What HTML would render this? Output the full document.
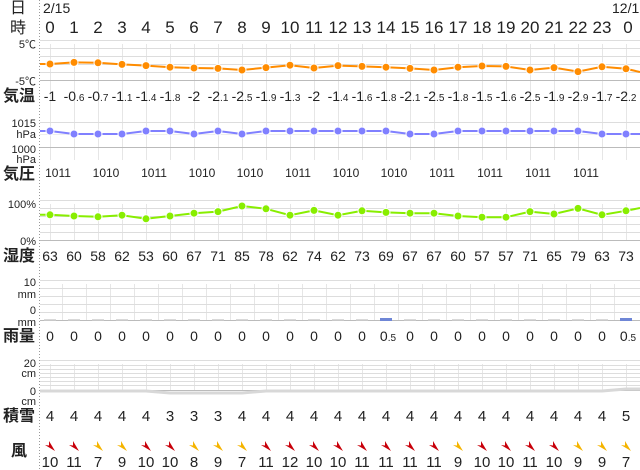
<!DOCTYPE html>
<html><head><meta charset="utf-8"><style>
html,body{margin:0;padding:0;background:#fff;}
svg{display:block;font-family:"Liberation Sans","Noto Sans CJK JP",sans-serif;}
.h{font-size:17px;fill:#222;text-anchor:middle}
.v{font-size:14px;fill:#222;text-anchor:middle}
.v tspan.s{font-size:10px}
.ax{font-size:11px;fill:#222;text-anchor:end}
.lb{font-size:16px;font-weight:bold;fill:#222;text-anchor:middle;font-family:"Noto Sans CJK JP",sans-serif}
.g line{stroke:#ddd;stroke-width:1}
.vg line{stroke:#e6e6e6;stroke-width:1}
</style></head><body>
<svg width="640" height="470" viewBox="0 0 640 470" xmlns="http://www.w3.org/2000/svg">
<line x1="39.5" y1="0" x2="39.5" y2="470" stroke="#999" stroke-dasharray="1,2"/>

<text class="lb" x="18" y="13" style="font-weight:normal">日</text>
<text class="lb" x="18" y="33" style="font-weight:normal">時</text>
<text x="43" y="13" style="font-size:14px;fill:#222">2/15</text>
<text x="612" y="13" style="font-size:14px;fill:#222">12/1</text>
<g class="h">
<text x="50" y="33">0</text><text x="74" y="33">1</text><text x="98" y="33">2</text><text x="122" y="33">3</text><text x="146" y="33">4</text><text x="170" y="33">5</text><text x="194" y="33">6</text><text x="218" y="33">7</text><text x="242" y="33">8</text><text x="266" y="33">9</text><text x="290" y="33">10</text><text x="314" y="33">11</text><text x="338" y="33">12</text><text x="362" y="33">13</text><text x="386" y="33">14</text><text x="410" y="33">15</text><text x="434" y="33">16</text><text x="458" y="33">17</text><text x="482" y="33">18</text><text x="506" y="33">19</text><text x="530" y="33">20</text><text x="554" y="33">21</text><text x="578" y="33">22</text><text x="602" y="33">23</text><text x="628" y="33">0</text>
</g>

<!-- vertical grids at columns -->
<g class="vg">
<line x1="50.5" y1="44" x2="50.5" y2="160"/><line x1="74.5" y1="44" x2="74.5" y2="160"/><line x1="98.5" y1="44" x2="98.5" y2="160"/><line x1="122.5" y1="44" x2="122.5" y2="160"/><line x1="146.5" y1="44" x2="146.5" y2="160"/><line x1="170.5" y1="44" x2="170.5" y2="160"/><line x1="194.5" y1="44" x2="194.5" y2="160"/><line x1="218.5" y1="44" x2="218.5" y2="160"/><line x1="242.5" y1="44" x2="242.5" y2="160"/><line x1="266.5" y1="44" x2="266.5" y2="160"/><line x1="290.5" y1="44" x2="290.5" y2="160"/><line x1="314.5" y1="44" x2="314.5" y2="160"/><line x1="338.5" y1="44" x2="338.5" y2="160"/><line x1="362.5" y1="44" x2="362.5" y2="160"/><line x1="386.5" y1="44" x2="386.5" y2="160"/><line x1="410.5" y1="44" x2="410.5" y2="160"/><line x1="434.5" y1="44" x2="434.5" y2="160"/><line x1="458.5" y1="44" x2="458.5" y2="160"/><line x1="482.5" y1="44" x2="482.5" y2="160"/><line x1="506.5" y1="44" x2="506.5" y2="160"/><line x1="530.5" y1="44" x2="530.5" y2="160"/><line x1="554.5" y1="44" x2="554.5" y2="160"/><line x1="578.5" y1="44" x2="578.5" y2="160"/><line x1="602.5" y1="44" x2="602.5" y2="160"/><line x1="626.5" y1="44" x2="626.5" y2="160"/>
</g>
<g class="vg">
<line x1="50.5" y1="204" x2="50.5" y2="240"/><line x1="74.5" y1="204" x2="74.5" y2="240"/><line x1="98.5" y1="204" x2="98.5" y2="240"/><line x1="122.5" y1="204" x2="122.5" y2="240"/><line x1="146.5" y1="204" x2="146.5" y2="240"/><line x1="170.5" y1="204" x2="170.5" y2="240"/><line x1="194.5" y1="204" x2="194.5" y2="240"/><line x1="218.5" y1="204" x2="218.5" y2="240"/><line x1="242.5" y1="204" x2="242.5" y2="240"/><line x1="266.5" y1="204" x2="266.5" y2="240"/><line x1="290.5" y1="204" x2="290.5" y2="240"/><line x1="314.5" y1="204" x2="314.5" y2="240"/><line x1="338.5" y1="204" x2="338.5" y2="240"/><line x1="362.5" y1="204" x2="362.5" y2="240"/><line x1="386.5" y1="204" x2="386.5" y2="240"/><line x1="410.5" y1="204" x2="410.5" y2="240"/><line x1="434.5" y1="204" x2="434.5" y2="240"/><line x1="458.5" y1="204" x2="458.5" y2="240"/><line x1="482.5" y1="204" x2="482.5" y2="240"/><line x1="506.5" y1="204" x2="506.5" y2="240"/><line x1="530.5" y1="204" x2="530.5" y2="240"/><line x1="554.5" y1="204" x2="554.5" y2="240"/><line x1="578.5" y1="204" x2="578.5" y2="240"/><line x1="602.5" y1="204" x2="602.5" y2="240"/><line x1="626.5" y1="204" x2="626.5" y2="240"/>
</g>
<!-- rain/snow vertical grids at midpoints -->
<g class="vg">
<line x1="62.5" y1="284" x2="62.5" y2="320"/><line x1="86.5" y1="284" x2="86.5" y2="320"/><line x1="110.5" y1="284" x2="110.5" y2="320"/><line x1="134.5" y1="284" x2="134.5" y2="320"/><line x1="158.5" y1="284" x2="158.5" y2="320"/><line x1="182.5" y1="284" x2="182.5" y2="320"/><line x1="206.5" y1="284" x2="206.5" y2="320"/><line x1="230.5" y1="284" x2="230.5" y2="320"/><line x1="254.5" y1="284" x2="254.5" y2="320"/><line x1="278.5" y1="284" x2="278.5" y2="320"/><line x1="302.5" y1="284" x2="302.5" y2="320"/><line x1="326.5" y1="284" x2="326.5" y2="320"/><line x1="350.5" y1="284" x2="350.5" y2="320"/><line x1="374.5" y1="284" x2="374.5" y2="320"/><line x1="398.5" y1="284" x2="398.5" y2="320"/><line x1="422.5" y1="284" x2="422.5" y2="320"/><line x1="446.5" y1="284" x2="446.5" y2="320"/><line x1="470.5" y1="284" x2="470.5" y2="320"/><line x1="494.5" y1="284" x2="494.5" y2="320"/><line x1="518.5" y1="284" x2="518.5" y2="320"/><line x1="542.5" y1="284" x2="542.5" y2="320"/><line x1="566.5" y1="284" x2="566.5" y2="320"/><line x1="590.5" y1="284" x2="590.5" y2="320"/><line x1="614.5" y1="284" x2="614.5" y2="320"/>
</g>
<g class="vg">
<line x1="50.5" y1="364" x2="50.5" y2="390"/><line x1="74.5" y1="364" x2="74.5" y2="390"/><line x1="98.5" y1="364" x2="98.5" y2="390"/><line x1="122.5" y1="364" x2="122.5" y2="390"/><line x1="146.5" y1="364" x2="146.5" y2="390"/><line x1="170.5" y1="364" x2="170.5" y2="390"/><line x1="194.5" y1="364" x2="194.5" y2="390"/><line x1="218.5" y1="364" x2="218.5" y2="390"/><line x1="242.5" y1="364" x2="242.5" y2="390"/><line x1="266.5" y1="364" x2="266.5" y2="390"/><line x1="290.5" y1="364" x2="290.5" y2="390"/><line x1="314.5" y1="364" x2="314.5" y2="390"/><line x1="338.5" y1="364" x2="338.5" y2="390"/><line x1="362.5" y1="364" x2="362.5" y2="390"/><line x1="386.5" y1="364" x2="386.5" y2="390"/><line x1="410.5" y1="364" x2="410.5" y2="390"/><line x1="434.5" y1="364" x2="434.5" y2="390"/><line x1="458.5" y1="364" x2="458.5" y2="390"/><line x1="482.5" y1="364" x2="482.5" y2="390"/><line x1="506.5" y1="364" x2="506.5" y2="390"/><line x1="530.5" y1="364" x2="530.5" y2="390"/><line x1="554.5" y1="364" x2="554.5" y2="390"/><line x1="578.5" y1="364" x2="578.5" y2="390"/><line x1="602.5" y1="364" x2="602.5" y2="390"/><line x1="626.5" y1="364" x2="626.5" y2="390"/>
</g>

<!-- horizontal grids -->
<g class="g">
<line x1="40" y1="40.5" x2="640" y2="40.5"/><line x1="40" y1="48.5" x2="640" y2="48.5"/><line x1="40" y1="56.5" x2="640" y2="56.5"/><line x1="40" y1="64.5" x2="640" y2="64.5"/><line x1="40" y1="72.5" x2="640" y2="72.5"/>
<line x1="40" y1="122.5" x2="640" y2="122.5"/><line x1="40" y1="134.5" x2="640" y2="134.5" style="stroke:#eee"/>
<line x1="40" y1="200.5" x2="640" y2="200.5"/><line x1="40" y1="208.5" x2="640" y2="208.5"/><line x1="40" y1="216.5" x2="640" y2="216.5"/><line x1="40" y1="224.5" x2="640" y2="224.5"/><line x1="40" y1="232.5" x2="640" y2="232.5"/>
<line x1="40" y1="280.5" x2="640" y2="280.5"/><line x1="40" y1="288.5" x2="640" y2="288.5"/><line x1="40" y1="296.5" x2="640" y2="296.5"/><line x1="40" y1="304.5" x2="640" y2="304.5"/><line x1="40" y1="312.5" x2="640" y2="312.5"/>
<line x1="40" y1="360.5" x2="640" y2="360.5"/><line x1="40" y1="365.5" x2="640" y2="365.5"/><line x1="40" y1="369.5" x2="640" y2="369.5"/><line x1="40" y1="373.5" x2="640" y2="373.5"/><line x1="40" y1="377.5" x2="640" y2="377.5"/><line x1="40" y1="381.5" x2="640" y2="381.5"/><line x1="40" y1="385.5" x2="640" y2="385.5"/>
</g>
<g stroke="#bbb" stroke-width="1">
<line x1="40" y1="80.5" x2="640" y2="80.5"/><line x1="40" y1="147.5" x2="640" y2="147.5"/><line x1="40" y1="240.5" x2="640" y2="240.5"/><line x1="40" y1="320.5" x2="640" y2="320.5"/><line x1="40" y1="390.5" x2="640" y2="390.5"/>
</g>

<!-- axis labels -->
<g class="ax">
<text x="36" y="48">5℃</text><text x="36" y="85">-5℃</text>
<text x="36" y="127">1015</text><text x="36" y="138">hPa</text>
<text x="36" y="153">1000</text><text x="36" y="163">hPa</text>
<text x="36" y="208">100%</text><text x="36" y="245">0%</text>
<text x="36" y="286">10</text><text x="36" y="298">mm</text>
<text x="36" y="314">0</text><text x="36" y="326">mm</text>
<text x="36" y="367">20</text><text x="36" y="377">cm</text>
<text x="36" y="395">0</text><text x="36" y="405">cm</text>
</g>
<g class="lb">
<text x="19" y="101">気温</text><text x="19" y="179">気圧</text><text x="19" y="261">湿度</text><text x="19" y="341">雨量</text><text x="19" y="421">積雪</text><text x="19" y="456">風</text>
</g>

<!-- temperature -->
<polyline fill="none" stroke="#ff8c00" stroke-width="2" points="40,64 50,64 74,62.4 98,62.8 122,64.4 146,65.6 170,67.2 194,68 218,68.4 242,70 266,67.6 290,65.2 314,68 338,65.6 362,66.4 386,67.2 410,68.4 434,70 458,67.2 482,66 506,66.4 530,70 554,67.6 578,71.6 602,66.8 626,68.8 640,72"/>
<g fill="#ff8c00" stroke="#fff" stroke-width="1">
<circle cx="50" cy="64" r="4"/><circle cx="74" cy="62.4" r="4"/><circle cx="98" cy="62.8" r="4"/><circle cx="122" cy="64.4" r="4"/><circle cx="146" cy="65.6" r="4"/><circle cx="170" cy="67.2" r="4"/><circle cx="194" cy="68" r="4"/><circle cx="218" cy="68.4" r="4"/><circle cx="242" cy="70" r="4"/><circle cx="266" cy="67.6" r="4"/><circle cx="290" cy="65.2" r="4"/><circle cx="314" cy="68" r="4"/><circle cx="338" cy="65.6" r="4"/><circle cx="362" cy="66.4" r="4"/><circle cx="386" cy="67.2" r="4"/><circle cx="410" cy="68.4" r="4"/><circle cx="434" cy="70" r="4"/><circle cx="458" cy="67.2" r="4"/><circle cx="482" cy="66" r="4"/><circle cx="506" cy="66.4" r="4"/><circle cx="530" cy="70" r="4"/><circle cx="554" cy="67.6" r="4"/><circle cx="578" cy="71.6" r="4"/><circle cx="602" cy="66.8" r="4"/><circle cx="626" cy="68.8" r="4"/>
</g>
<g class="v">
<text x="50" y="101">-1</text><text x="74" y="101">-0<tspan class="s">.6</tspan></text><text x="98" y="101">-0<tspan class="s">.7</tspan></text><text x="122" y="101">-1<tspan class="s">.1</tspan></text><text x="146" y="101">-1<tspan class="s">.4</tspan></text><text x="170" y="101">-1<tspan class="s">.8</tspan></text><text x="194" y="101">-2</text><text x="218" y="101">-2<tspan class="s">.1</tspan></text><text x="242" y="101">-2<tspan class="s">.5</tspan></text><text x="266" y="101">-1<tspan class="s">.9</tspan></text><text x="290" y="101">-1<tspan class="s">.3</tspan></text><text x="314" y="101">-2</text><text x="338" y="101">-1<tspan class="s">.4</tspan></text><text x="362" y="101">-1<tspan class="s">.6</tspan></text><text x="386" y="101">-1<tspan class="s">.8</tspan></text><text x="410" y="101">-2<tspan class="s">.1</tspan></text><text x="434" y="101">-2<tspan class="s">.5</tspan></text><text x="458" y="101">-1<tspan class="s">.8</tspan></text><text x="482" y="101">-1<tspan class="s">.5</tspan></text><text x="506" y="101">-1<tspan class="s">.6</tspan></text><text x="530" y="101">-2<tspan class="s">.5</tspan></text><text x="554" y="101">-1<tspan class="s">.9</tspan></text><text x="578" y="101">-2<tspan class="s">.9</tspan></text><text x="602" y="101">-1<tspan class="s">.7</tspan></text><text x="626" y="101">-2<tspan class="s">.2</tspan></text>
</g>

<!-- pressure -->
<polyline fill="none" stroke="#8080ff" stroke-width="2" points="40,131 50,131 74,134 98,134 122,134 146,131 170,131 194,134 218,131 242,134 266,131 290,131 314,131 338,131 362,131 386,131 410,134 434,134 458,131 482,131 506,131 530,131 554,131 578,131 602,134 626,134 640,134"/>
<g fill="#8080ff" stroke="#fff" stroke-width="1">
<circle cx="50" cy="131" r="4"/><circle cx="74" cy="134" r="4"/><circle cx="98" cy="134" r="4"/><circle cx="122" cy="134" r="4"/><circle cx="146" cy="131" r="4"/><circle cx="170" cy="131" r="4"/><circle cx="194" cy="134" r="4"/><circle cx="218" cy="131" r="4"/><circle cx="242" cy="134" r="4"/><circle cx="266" cy="131" r="4"/><circle cx="290" cy="131" r="4"/><circle cx="314" cy="131" r="4"/><circle cx="338" cy="131" r="4"/><circle cx="362" cy="131" r="4"/><circle cx="386" cy="131" r="4"/><circle cx="410" cy="134" r="4"/><circle cx="434" cy="134" r="4"/><circle cx="458" cy="131" r="4"/><circle cx="482" cy="131" r="4"/><circle cx="506" cy="131" r="4"/><circle cx="530" cy="131" r="4"/><circle cx="554" cy="131" r="4"/><circle cx="578" cy="131" r="4"/><circle cx="602" cy="134" r="4"/><circle cx="626" cy="134" r="4"/>
</g>
<g class="v" style="font-size:12px">
<text x="58" y="177">1011</text><text x="106" y="177">1010</text><text x="154" y="177">1011</text><text x="202" y="177">1010</text><text x="250" y="177">1010</text><text x="298" y="177">1011</text><text x="346" y="177">1010</text><text x="394" y="177">1010</text><text x="442" y="177">1011</text><text x="490" y="177">1011</text><text x="538" y="177">1011</text><text x="586" y="177">1011</text>
</g>

<!-- humidity -->
<polyline fill="none" stroke="#88ee00" stroke-width="2" points="40,214.8 50,214.8 74,216 98,216.8 122,215.2 146,218.8 170,216 194,213.2 218,211.6 242,206 266,208.8 290,215.2 314,210.4 338,215.2 362,210.8 386,212.4 410,213.2 434,213.2 458,216 482,217.2 506,217.2 530,211.6 554,214 578,208.4 602,214.8 626,210.8 640,208"/>
<g fill="#88ee00" stroke="#fff" stroke-width="1">
<circle cx="50" cy="214.8" r="4"/><circle cx="74" cy="216" r="4"/><circle cx="98" cy="216.8" r="4"/><circle cx="122" cy="215.2" r="4"/><circle cx="146" cy="218.8" r="4"/><circle cx="170" cy="216" r="4"/><circle cx="194" cy="213.2" r="4"/><circle cx="218" cy="211.6" r="4"/><circle cx="242" cy="206" r="4"/><circle cx="266" cy="208.8" r="4"/><circle cx="290" cy="215.2" r="4"/><circle cx="314" cy="210.4" r="4"/><circle cx="338" cy="215.2" r="4"/><circle cx="362" cy="210.8" r="4"/><circle cx="386" cy="212.4" r="4"/><circle cx="410" cy="213.2" r="4"/><circle cx="434" cy="213.2" r="4"/><circle cx="458" cy="216" r="4"/><circle cx="482" cy="217.2" r="4"/><circle cx="506" cy="217.2" r="4"/><circle cx="530" cy="211.6" r="4"/><circle cx="554" cy="214" r="4"/><circle cx="578" cy="208.4" r="4"/><circle cx="602" cy="214.8" r="4"/><circle cx="626" cy="210.8" r="4"/>
</g>
<g class="v">
<text x="50" y="261">63</text><text x="74" y="261">60</text><text x="98" y="261">58</text><text x="122" y="261">62</text><text x="146" y="261">53</text><text x="170" y="261">60</text><text x="194" y="261">67</text><text x="218" y="261">71</text><text x="242" y="261">85</text><text x="266" y="261">78</text><text x="290" y="261">62</text><text x="314" y="261">74</text><text x="338" y="261">62</text><text x="362" y="261">73</text><text x="386" y="261">69</text><text x="410" y="261">67</text><text x="434" y="261">67</text><text x="458" y="261">60</text><text x="482" y="261">57</text><text x="506" y="261">57</text><text x="530" y="261">71</text><text x="554" y="261">65</text><text x="578" y="261">79</text><text x="602" y="261">63</text><text x="626" y="261">73</text>
</g>

<!-- rain -->
<g stroke="#ccc" stroke-width="1.5">
<line x1="44" y1="320" x2="56" y2="320"/><line x1="68" y1="320" x2="80" y2="320"/><line x1="92" y1="320" x2="104" y2="320"/><line x1="116" y1="320" x2="128" y2="320"/><line x1="140" y1="320" x2="152" y2="320"/><line x1="164" y1="320" x2="176" y2="320"/><line x1="188" y1="320" x2="200" y2="320"/><line x1="212" y1="320" x2="224" y2="320"/><line x1="236" y1="320" x2="248" y2="320"/><line x1="260" y1="320" x2="272" y2="320"/><line x1="284" y1="320" x2="296" y2="320"/><line x1="308" y1="320" x2="320" y2="320"/><line x1="332" y1="320" x2="344" y2="320"/><line x1="356" y1="320" x2="368" y2="320"/><line x1="404" y1="320" x2="416" y2="320"/><line x1="428" y1="320" x2="440" y2="320"/><line x1="452" y1="320" x2="464" y2="320"/><line x1="476" y1="320" x2="488" y2="320"/><line x1="500" y1="320" x2="512" y2="320"/><line x1="524" y1="320" x2="536" y2="320"/><line x1="548" y1="320" x2="560" y2="320"/><line x1="572" y1="320" x2="584" y2="320"/><line x1="596" y1="320" x2="608" y2="320"/>
</g>
<rect x="380" y="318" width="12" height="3" fill="#6f86d6"/>
<rect x="620" y="318" width="12" height="3" fill="#6f86d6"/>
<g class="v">
<text x="50" y="341">0</text><text x="74" y="341">0</text><text x="98" y="341">0</text><text x="122" y="341">0</text><text x="146" y="341">0</text><text x="170" y="341">0</text><text x="194" y="341">0</text><text x="218" y="341">0</text><text x="242" y="341">0</text><text x="266" y="341">0</text><text x="290" y="341">0</text><text x="314" y="341">0</text><text x="338" y="341">0</text><text x="362" y="341">0</text><text x="388" y="341">0<tspan class="s">.5</tspan></text><text x="410" y="341">0</text><text x="434" y="341">0</text><text x="458" y="341">0</text><text x="482" y="341">0</text><text x="506" y="341">0</text><text x="530" y="341">0</text><text x="554" y="341">0</text><text x="578" y="341">0</text><text x="602" y="341">0</text><text x="628" y="341">0<tspan class="s">.5</tspan></text>
</g>

<!-- snow -->
<polyline fill="none" stroke="#d8d8d8" stroke-width="3" points="40,391 146,391 170,393 242,393 266,391 602,391 626,389 640,389"/>
<g class="v" style="font-size:15px">
<text x="50" y="421">4</text><text x="74" y="421">4</text><text x="98" y="421">4</text><text x="122" y="421">4</text><text x="146" y="421">4</text><text x="170" y="421">3</text><text x="194" y="421">3</text><text x="218" y="421">3</text><text x="242" y="421">4</text><text x="266" y="421">4</text><text x="290" y="421">4</text><text x="314" y="421">4</text><text x="338" y="421">4</text><text x="362" y="421">4</text><text x="386" y="421">4</text><text x="410" y="421">4</text><text x="434" y="421">4</text><text x="458" y="421">4</text><text x="482" y="421">4</text><text x="506" y="421">4</text><text x="530" y="421">4</text><text x="554" y="421">4</text><text x="578" y="421">4</text><text x="602" y="421">4</text><text x="626" y="421">5</text>
</g>

<!-- wind arrows -->
<defs>
<polygon id="ar" points="5,5 -5,-1 -1,-0.5 -1,-5"/>
</defs>
<g fill="#c8000a">
<use href="#ar" x="50" y="446"/><use href="#ar" x="74" y="446"/><use href="#ar" x="146" y="446"/><use href="#ar" x="170" y="446"/><use href="#ar" x="266" y="446"/><use href="#ar" x="290" y="446"/><use href="#ar" x="314" y="446"/><use href="#ar" x="338" y="446"/><use href="#ar" x="362" y="446"/><use href="#ar" x="386" y="446"/><use href="#ar" x="410" y="446"/><use href="#ar" x="434" y="446"/><use href="#ar" x="482" y="446"/><use href="#ar" x="506" y="446"/><use href="#ar" x="530" y="446"/><use href="#ar" x="554" y="446"/>
</g>
<g fill="#f5b400">
<use href="#ar" x="98" y="446"/><use href="#ar" x="122" y="446"/><use href="#ar" x="194" y="446"/><use href="#ar" x="218" y="446"/><use href="#ar" x="242" y="446"/><use href="#ar" x="458" y="446"/><use href="#ar" x="578" y="446"/><use href="#ar" x="602" y="446"/><use href="#ar" x="626" y="446"/>
</g>
<g class="v" style="font-size:15px">
<text x="50" y="467">10</text><text x="74" y="467">11</text><text x="98" y="467">7</text><text x="122" y="467">9</text><text x="146" y="467">10</text><text x="170" y="467">10</text><text x="194" y="467">8</text><text x="218" y="467">9</text><text x="242" y="467">7</text><text x="266" y="467">11</text><text x="290" y="467">12</text><text x="314" y="467">10</text><text x="338" y="467">10</text><text x="362" y="467">11</text><text x="386" y="467">11</text><text x="410" y="467">11</text><text x="434" y="467">11</text><text x="458" y="467">9</text><text x="482" y="467">10</text><text x="506" y="467">10</text><text x="530" y="467">11</text><text x="554" y="467">10</text><text x="578" y="467">9</text><text x="602" y="467">9</text><text x="626" y="467">7</text>
</g>
</svg>
</body></html>
